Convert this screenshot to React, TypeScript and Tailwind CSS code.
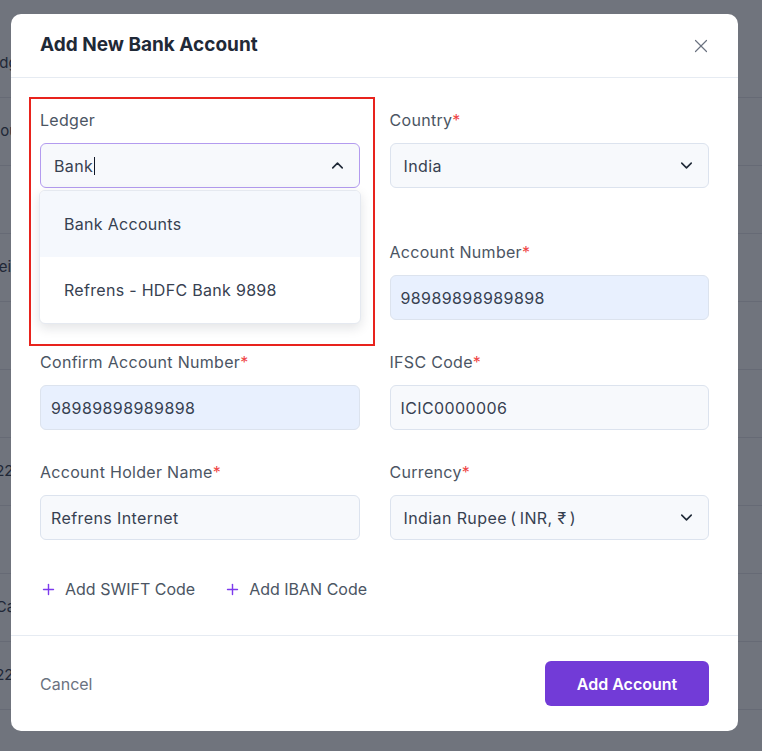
import { ChevronDown, ChevronUp, Plus, X } from "lucide-react";

const bgRows = ["Ledger", "Account", "", "Receipts", "", "", "2239", "", "Cash", "2239"];

function Label({ text, required }: { text: string; required?: boolean }) {
  return (
    <div className="mb-[13px] h-[20px] text-[16px] leading-[20px] tracking-[0.3px] text-[#4b5563]">
      {text}
      {required && <span className="text-[#ef4444]">*</span>}
    </div>
  );
}

function Field({
  label,
  value,
  required,
  autofill,
  select,
}: {
  label: string;
  value: string;
  required?: boolean;
  autofill?: boolean;
  select?: boolean;
}) {
  return (
    <div>
      <Label text={label} required={required} />
      <div
        className={`flex h-[45px] items-center justify-between rounded-[6px] border border-[#dce3ee] pr-[12px] text-[16px] tracking-[0.4px] text-[#374151] ${
          autofill ? "bg-[#e8f0fe]" : "bg-[#f7f9fc]"
        } ${select ? "pl-[13px]" : "pl-[10px]"}`}
      >
        <span>{value}</span>
        {select && <ChevronDown size={19} strokeWidth={2} className="text-[#1f2937]" />}
      </div>
    </div>
  );
}

export default function App() {
  return (
    <div className="relative h-[751px] w-[762px] overflow-hidden bg-white font-['Inter',sans-serif]">
      {/* page behind the modal */}
      <div className="ml-[-40px] flex flex-col pt-[30px]">
        {bgRows.map((t, i) => (
          <div
            key={i}
            className="flex h-[68px] items-center border-b border-[#e5e7eb] px-[12px] text-[15px] text-[#374151]"
          >
            <span className="w-[60px] text-right">{t}</span>
          </div>
        ))}
      </div>
      <div className="absolute inset-0 bg-[#111827]/60" />

      {/* modal */}
      <div className="absolute left-[11px] top-[14px] flex h-[717px] w-[727px] flex-col rounded-[10px] bg-white">
        <div className="flex h-[64px] shrink-0 items-center justify-between border-b border-[#e6ebf2] pl-[29px] pr-[26px]">
          <h2 className="text-[19px] font-bold text-[#1f2937]">Add New Bank Account</h2>
          <X size={22} strokeWidth={1.3} className="text-[#6b7280]" />
        </div>

        <div className="flex-1 px-[29px] pt-[32px]">
          <div className="grid grid-cols-2 gap-x-[30px] gap-y-[32px]">
            <div className="relative z-10 mb-[22px]">
              <Label text="Ledger" />
              <div className="flex h-[45px] items-center justify-between rounded-[6px] border border-[#b39bef] bg-[#f7f9fc] pl-[13px] pr-[12px] text-[16px] tracking-[0.4px] text-[#374151]">
                <span className="flex items-center">
                  Bank
                  <span className="ml-[1px] h-[18px] w-[1px] bg-[#111827]" />
                </span>
                <ChevronUp size={19} strokeWidth={2} className="text-[#1f2937]" />
              </div>
              <div className="absolute left-[-1px] right-[-1px] top-full mt-[2px] overflow-hidden rounded-[6px] border border-[#e5e9f0] bg-white shadow-[0_4px_12px_rgba(15,23,42,0.12)]">
                <div className="flex h-[66px] items-center bg-[#f5f8fd] px-[24px] text-[16px] tracking-[0.3px] text-[#374151]">
                  Bank Accounts
                </div>
                <div className="flex h-[66px] items-center px-[24px] text-[16px] tracking-[0.3px] text-[#374151]">
                  Refrens - HDFC Bank 9898
                </div>
              </div>
            </div>
            <div className="mb-[22px]">
              <Field label="Country" value="India" required select />
            </div>

            {/* slot hidden under the open dropdown */}
            <div className="h-[78px]" />
            <Field label="Account Number" value="98989898989898" required autofill />

            <Field label="Confirm Account Number" value="98989898989898" required autofill />
            <Field label="IFSC Code" value="ICIC0000006" required />

            <Field label="Account Holder Name" value="Refrens Internet" required />
            <Field label="Currency" value={"Indian Rupee\u2009(\u2009INR, ₹\u2009)"} required select />
          </div>

          <div className="mt-[39px] flex h-[20px] items-center gap-[29px] text-[16px] text-[#4b5563]">
            <button className="flex items-center gap-[8px]">
              <Plus size={17} strokeWidth={2} className="text-[#7c3aed]" />
              Add SWIFT Code
            </button>
            <button className="flex items-center gap-[8px]">
              <Plus size={17} strokeWidth={2} className="text-[#7c3aed]" />
              Add IBAN Code
            </button>
          </div>
        </div>

        <div className="flex h-[96px] shrink-0 items-center justify-between border-t border-[#e6ebf2] px-[29px]">
          <button className="text-[16px] text-[#6b7280]">Cancel</button>
          <button className="h-[45px] w-[164px] rounded-[6px] bg-[#723bd7] text-[16px] font-semibold text-white">
            Add Account
          </button>
        </div>

        {/* highlight annotation */}
        <div className="pointer-events-none absolute left-[18px] top-[83px] h-[249px] w-[346px] border-2 border-[#e8231d]" />
      </div>
    </div>
  );
}
